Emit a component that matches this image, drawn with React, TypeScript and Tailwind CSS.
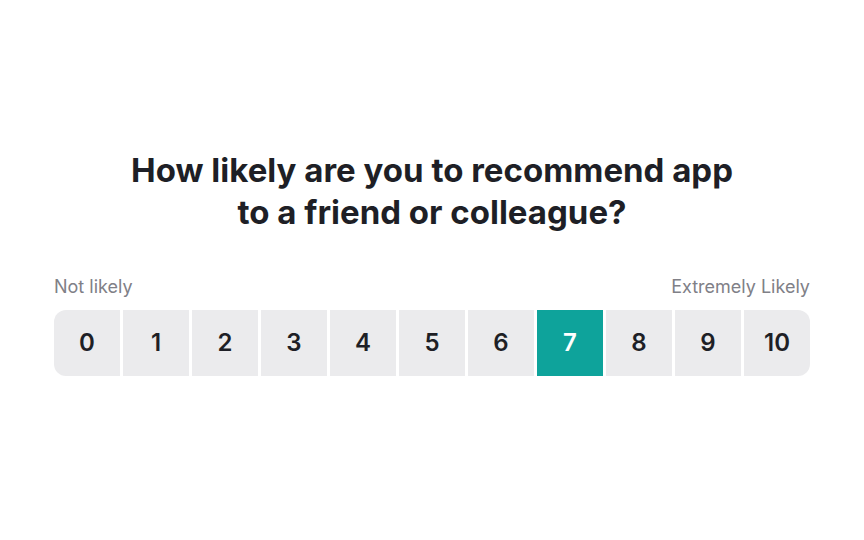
const SCORES = [0, 1, 2, 3, 4, 5, 6, 7, 8, 9, 10];

export default function App() {
  const selected = 7;

  return (
    <div className="w-[864px] h-[540px] bg-white flex flex-col items-center pt-[149px] font-['Inter',sans-serif]">
      <h1 className="text-[33px] leading-[42px] font-bold text-[#1e1f26] text-center">
        How likely are you to recommend app
        <br />
        to a friend or colleague?
      </h1>
      <div className="w-[756px] mt-[42px]">
        <div className="flex justify-between text-[18px] leading-[24px] text-[#808087]">
          <span>Not likely</span>
          <span>Extremely Likely</span>
        </div>
        <div className="mt-[11px] flex gap-[3px] rounded-[12px] overflow-hidden">
          {SCORES.map((n) => (
            <button
              key={n}
              className={`h-[66px] flex-1 flex items-center justify-center text-[24px] font-semibold ${
                n === selected ? "bg-[#0ea39b] text-white" : "bg-[#ebebed] text-[#1e1f26]"
              }`}
            >
              {n}
            </button>
          ))}
        </div>
      </div>
    </div>
  );
}
